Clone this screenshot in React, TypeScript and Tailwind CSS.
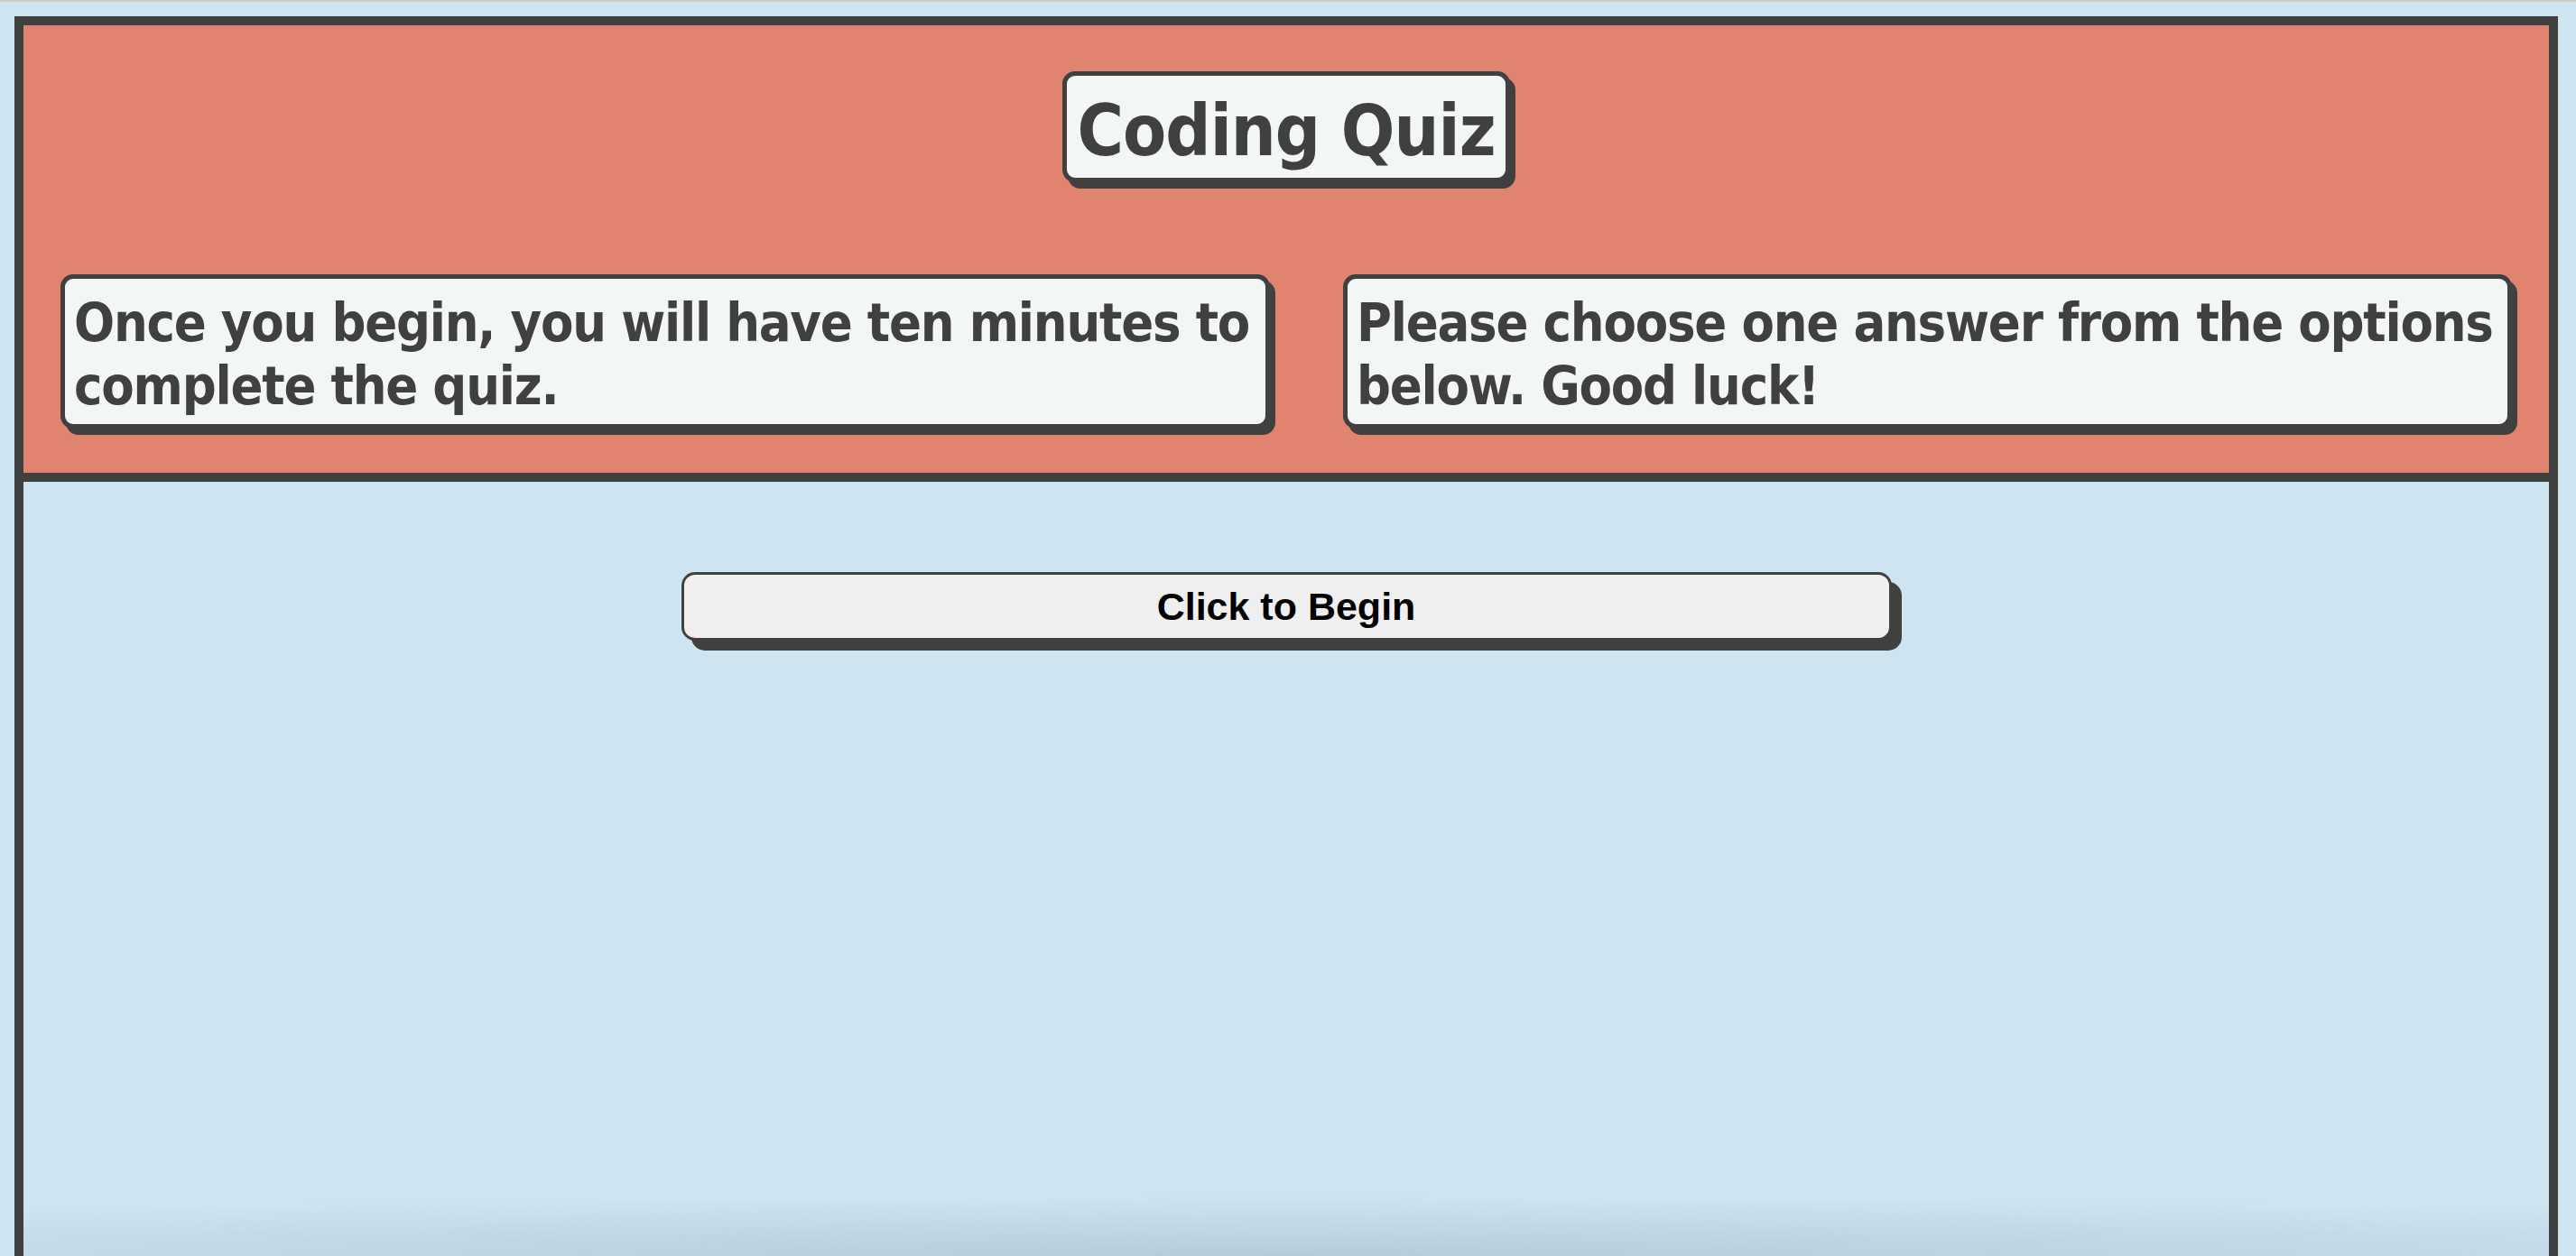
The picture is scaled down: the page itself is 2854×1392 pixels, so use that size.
import React from "react";

const heading = "font-['DejaVu_Sans_Condensed','DejaVu_Sans',sans-serif] font-bold text-[#404040]";

export default function App() {
  return (
    <div className="h-screen overflow-hidden bg-[#cfe4f1]">
      {/* thin top rule */}
      <div className="h-[2px] bg-[#cccccc]" />

      <div className="relative ml-[16px] mr-[20px] mt-[16px] h-[1500px] border-x-[10px] border-t-[10px] border-[#404040]">
        {/* Header */}
        <header className="flex flex-col items-center border-b-[10px] border-[#404040] bg-[#e0846f] pt-[51px] pb-[49px]">
          <h1
            className={`${heading} rounded-[14px] border-[5px] border-[#404040] bg-[#f2f6f7] px-[11px] pt-[10px] pb-[1px] text-[78px] leading-[102px] tracking-[-0.9px] shadow-[6px_7px_0_#404040]`}
          >
            Coding Quiz
          </h1>

          <div className="mt-[102px] flex w-full justify-between px-[41px]">
            <p
              className={`${heading} w-[1340px] rounded-[14px] border-[5px] border-[#404040] bg-[#f2f6f7] px-[10px] pt-[14px] pb-[7px] text-[59px] leading-[70px] tracking-[-1.2px] shadow-[6px_7px_0_#404040]`}
            >
              Once you begin, you will have ten minutes to complete the quiz.
            </p>
            <p
              className={`${heading} w-[1295px] rounded-[14px] border-[5px] border-[#404040] bg-[#f2f6f7] px-[10px] pt-[14px] pb-[7px] text-[59px] leading-[70px] tracking-[-1.2px] shadow-[6px_7px_0_#404040]`}
            >
              Please choose one answer from the options below. Good luck!
            </p>
          </div>
        </header>

        {/* Body */}
        <main className="flex justify-center pt-[100px]">
          <button className="h-[76px] w-[1341px] rounded-[15px] border-[3px] border-[#404040] bg-[#efefef] font-['Liberation_Sans',Arial,sans-serif] text-[43px] font-bold leading-[70px] text-black shadow-[11px_11px_0_#404040]">
            Click to Begin
          </button>
        </main>
      </div>

      {/* bottom shading */}
      <div className="pointer-events-none fixed bottom-0 left-[26px] right-[30px] h-[65px] bg-[radial-gradient(ellipse_80%_100%_at_50%_100%,rgba(140,165,185,0.38),transparent)]" />
    </div>
  );
}
